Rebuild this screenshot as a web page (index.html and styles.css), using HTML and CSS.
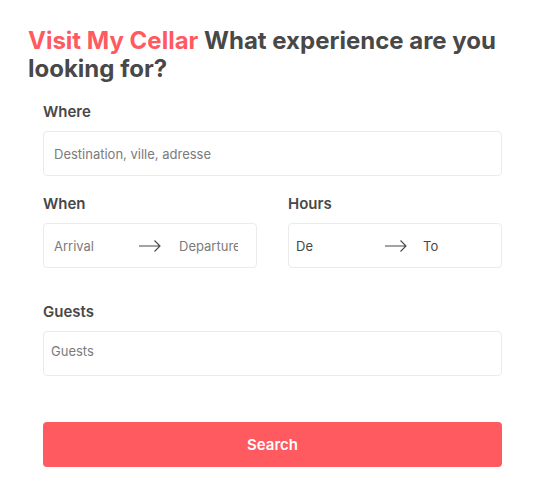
FILE: index.html
```html
<!DOCTYPE html>
<html lang="en">
<head>
<meta charset="utf-8">
<title>Visit My Cellar</title>
<link rel="stylesheet" href="styles.css">
</head>
<body>
<main class="page">
  <h1 class="title"><span class="brand">Visit My Cellar</span> <span class="question">What experience are you</span> <span class="question">looking for?</span></h1>
  <form class="form">
    <div class="field">
      <label class="label">Where</label>
      <div class="box">
        <input class="input" type="text" placeholder="Destination, ville, adresse">
      </div>
    </div>
    <div class="row">
      <div class="field half">
        <label class="label">When</label>
        <div class="box range">
          <input class="input from" type="text" placeholder="Arrival">
          <svg class="arrow" width="22" height="12" viewBox="0 0 22 12"><path d="M0 6H21M15.5 0.5L21 6L15.5 11.5" fill="none" stroke="#484848" stroke-width="1.1"/></svg>
          <input class="input to" type="text" placeholder="Departure">
        </div>
      </div>
      <div class="field half">
        <label class="label">Hours</label>
        <div class="box range hours">
          <span class="value from">De</span>
          <svg class="arrow" width="22" height="12" viewBox="0 0 22 12"><path d="M0 6H21M15.5 0.5L21 6L15.5 11.5" fill="none" stroke="#484848" stroke-width="1.1"/></svg>
          <span class="value to">To</span>
        </div>
      </div>
    </div>
    <div class="field guests">
      <label class="label">Guests</label>
      <div class="box tall">
        <input class="input" type="text" placeholder="Guests">
      </div>
    </div>
    <button class="button" type="button">Search</button>
  </form>
</main>
</body>
</html>
```
FILE: styles.css
```css
* { box-sizing: border-box; }
body {
  margin: 0;
  background: #fff;
  font-family: Inter, "Noto Sans", sans-serif;
  color: #484848;
}
.page {
  padding: 27px 0 0 28px;
  width: 544px;
}
.title {
  margin: 0;
  font-size: 24px;
  line-height: 28px;
  font-weight: 700;
  color: #484848;
  width: 480px;
}
.brand { color: #ff5a5f; }
.question { color: #484848; }
.form {
  margin: 19px 0 0 15px;
  width: 459px;
}
.field { display: flex; flex-direction: column; }
.label {
  font-size: 15px;
  line-height: 20px;
  font-weight: 600;
  margin-bottom: 9px;
}
.box {
  height: 45px;
  border: 1px solid #ebebeb;
  border-radius: 4px;
  display: flex;
  align-items: center;
  padding: 0 10px;
}
.input {
  border: 0;
  outline: 0;
  padding: 0;
  font: inherit;
  font-size: 13px;
  color: #484848;
  background: transparent;
  width: 100%;
}
.input::placeholder { color: #7b7b7b; }
.row {
  display: flex;
  gap: 31px;
  margin-top: 18px;
}
.half { width: 214px; }
.range .from { width: 85px; flex: none; }
.range .to { width: 59px; flex: none; margin-left: 18px; }
.arrow { flex: none; }
.hours { padding-left: 7px; }
.hours .from { width: 89px; }
.hours .to { margin-left: 16px; }
.value { font-size: 13px; color: #484848; }
.guests { margin-top: 34px; }
.tall { padding: 0 7px 6px; }
.button {
  margin-top: 46px;
  width: 459px;
  height: 45px;
  border: 0;
  border-radius: 4px;
  background: #ff5a5f;
  color: #fff;
  font: inherit;
  font-size: 15px;
  font-weight: 600;
}
```
